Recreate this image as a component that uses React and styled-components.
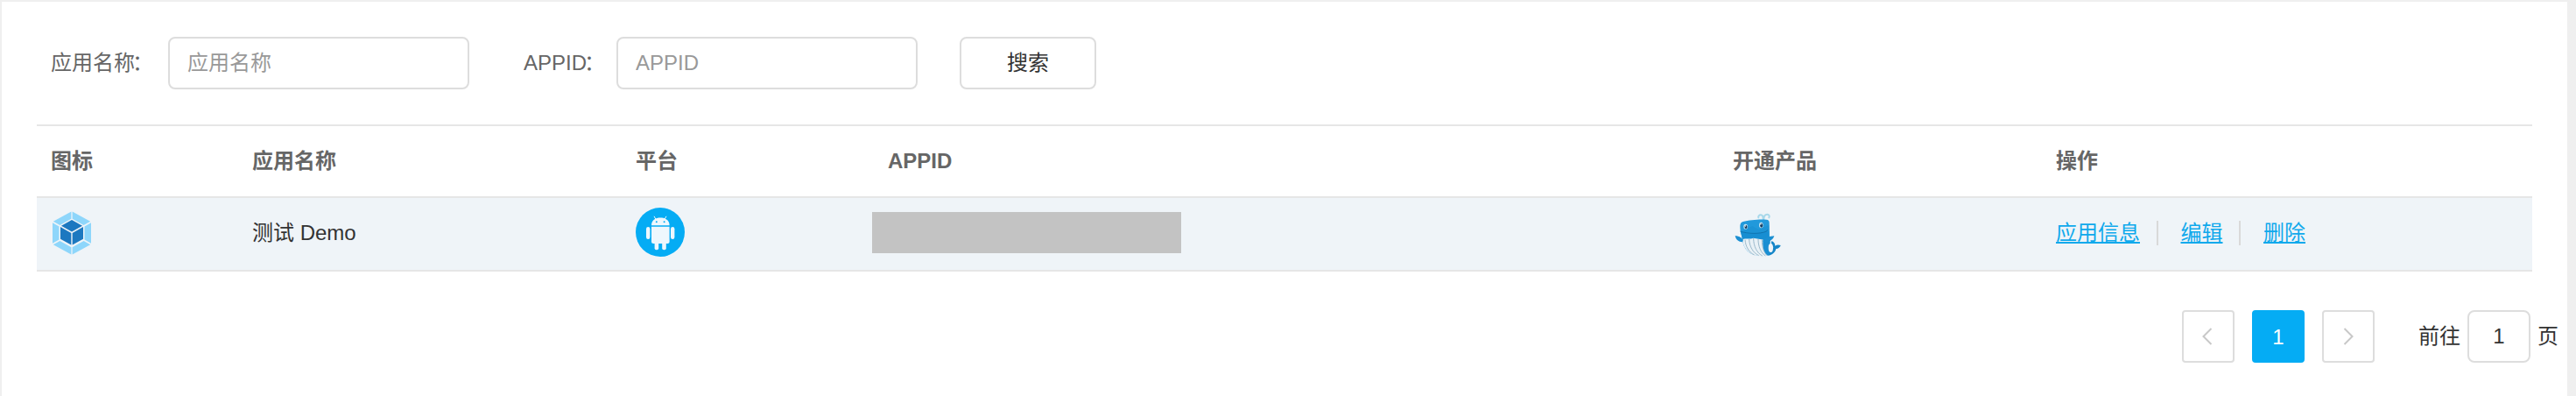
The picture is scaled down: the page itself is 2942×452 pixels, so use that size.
import React from 'react'
import styled, { createGlobalStyle } from 'styled-components'

const GlobalStyle = createGlobalStyle`
  * {
    box-sizing: border-box;
  }

  body {
    margin: 0;
    background: #efefef;
    font-family: "Liberation Sans", "Noto Sans CJK SC", sans-serif;
    font-size: 24px;
    line-height: 34px;
    color: #333;
  }

  input, button {
    font: inherit;
    outline: none;
  }
`;

const Page = styled.main`
  height: 452px;
  margin-right: 10px;
  border-top: 2px solid #efefef;
  border-left: 2px solid #efefef;
  background: #fff;
`;

const Toolbar = styled.form`
  display: flex;
  align-items: center;
  padding: 40px 0 40px 56px;
`;

const Field = styled.label`
  display: flex;
  align-items: center;
  margin-right: ${({ gap }) => gap}px;
`;

const FieldName = styled.span`
  width: ${({ width }) => width}px;
  color: #666;
  white-space: nowrap;
`;

const Colon = styled.span`
  margin-left: -3px;
`;

const TextInput = styled.input`
  width: 344px;
  height: 60px;
  padding: 0 20px;
  border: 2px solid #ddd;
  border-radius: 8px;
  background: #fff;

  &::placeholder {
    color: #999;
    opacity: 1;
  }
`;

const SearchButton = styled.button`
  width: 156px;
  height: 60px;
  padding: 0;
  border: 2px solid #ddd;
  border-radius: 8px;
  background: #fff;
  color: #333;
`;

const Table = styled.section`
  margin: 0 40px;
  border-top: 2px solid #e6e6e6;
`;

const Row = styled.div`
  display: grid;
  grid-template-columns: 230px 438px 288px 965px 369px 1fr;
  align-items: center;
  height: ${({ head }) => (head ? 82 : 84)}px;
  padding-left: 16px;
  padding-bottom: ${({ head }) => (head ? 0 : 4)}px;
  border-bottom: 2px solid #e6e6e6;
  background: ${({ head }) => (head ? '#fff' : '#eff4f8')};
  color: ${({ head }) => (head ? '#666' : '#333')};
  font-weight: ${({ head }) => (head ? 'bold' : 'normal')};
`;

const Cell = styled.div`
  display: flex;
  align-items: center;
  padding-top: ${({ low }) => (low ? 2 : 0)}px;
  white-space: nowrap;
`;

const Mask = styled.div`
  width: 353px;
  height: 47px;
  margin-top: 1px;
  margin-left: -18px;
  background: #c3c3c3;
`;

const Action = styled.a`
  color: #0fa9ec;
  text-decoration: underline;
  text-decoration-thickness: 2px;
  text-underline-offset: 2px;
  text-decoration-skip-ink: none;
  cursor: pointer;

  & + & {
    margin-left: 18.5px;
    padding-left: 28px;
    background: linear-gradient(#d9d9d9, #d9d9d9) left center / 2px 28px no-repeat;
  }
`;

const Pagination = styled.nav`
  display: flex;
  justify-content: flex-end;
  align-items: center;
  margin-top: 44px;
  padding-right: 10px;
`;

const PageButton = styled.button`
  display: flex;
  align-items: center;
  justify-content: center;
  width: 60px;
  height: 60px;
  margin-right: 20px;
  padding: ${({ active }) => (active ? '2px 0 0' : 0)};
  border: 2px solid ${({ active }) => (active ? '#05acf4' : '#ddd')};
  border-radius: 4px;
  background: ${({ active }) => (active ? '#05acf4' : '#fff')};
  color: ${({ active }) => (active ? '#fff' : '#c8c8c8')};
`;

const Jump = styled.label`
  display: flex;
  align-items: center;
  margin-left: 30px;
`;

const JumpInput = styled.input`
  width: 72px;
  height: 60px;
  margin: 0 8px;
  padding: 0;
  border: 2px solid #ddd;
  border-radius: 8px;
  background: #fff;
  color: #333;
  text-align: center;
`;

const AppIcon = () => (
  <svg width="48" height="52" viewBox="0 -1 48 52">
    <g fill="#8ed6fb">
      <path d="M23.4 1.500v8.300L10.400 17 2.800 12.700z" />
      <path d="M24.600 1.500v8.300l13 7.200 7.600-4.300z" />
      <path d="M2 14.200l7.500 4.200v15.200L2 37.800z" />
      <path d="M46 14.200l-7.500 4.200v15.200l7.500 4.200z" />
      <path d="M2.800 39.200l7.600-4.300 13 7.300v8.300z" />
      <path d="M45.200 39.200l-7.600-4.300-13 7.300v8.300z" />
    </g>
    <g fill="#1c78c0">
      <path d="M24 11l12 6.700-12 6.900-12-6.900z" />
      <path d="M11 18.900l12.300 7v13.700L11 32.700z" />
      <path d="M37 18.900l-12.300 7v13.700L37 32.700z" />
    </g>
  </svg>
);

const AndroidIcon = () => (
  <svg width="56" height="56" viewBox="0 0 56 56">
    <circle cx="28" cy="28" r="28" fill="#05acf4" />
    <g fill="#eef7fd">
      <path d="M18 20.200c0-5.600 4.200-8.700 10.200-8.700s10.400 3.100 10.400 8.700z" />
      <path d="M18 21.800h20.600v17c0 1.400-.8 2.200-2.200 2.200H20.200c-1.400 0-2.200-.8-2.200-2.200z" />
      <rect x="12" y="22" width="4.400" height="14" rx="2.200" />
      <rect x="40" y="22" width="4.400" height="14" rx="2.200" />
      <rect x="21.600" y="38" width="4.600" height="10.300" rx="2" />
      <rect x="30.200" y="38" width="4.600" height="10.300" rx="2" />
    </g>
    <path d="M21 9.800l2 3.600M35 9.800l-2 3.600" stroke="#eef7fd" strokeWidth="1" />
    <circle cx="23.800" cy="16.200" r="1" fill="#05acf4" />
    <circle cx="32.600" cy="16.200" r="1" fill="#05acf4" />
  </svg>
);

const WhaleIcon = () => (
  <svg width="56" height="58" viewBox="9 0 168 174">
    {/* spout */}
    <path
      d="M113 43c0-9-1-15-8-15-6 0-10 5-8 9M115 43c0-10 4-17 12-17 6 0 9 6 6 11"
      fill="none"
      stroke="#a8d8ea"
      strokeWidth="6"
      strokeLinecap="round"
    />
    {/* tail */}
    <path d="M118 168c22 1 36-10 39-24 8 0 14-5 16-12-7-3-14-2-19 2 0-8-4-14-12-17-3 9 0 17 6 22-4 8-8 12-14 14z" fill="#1485c8" />
    {/* body */}
    <path d="M44 51c22-6 58-9 80-7 7 0 10 4 10 11l1 63c0 28-12 50-32 50-36 0-58-22-62-59l-6-27c-2-17-2-28 9-31z" fill="#2199db" />
    <path d="M36 86c25 8 58 9 97-2v29H43z" fill="#178ed2" />
    <path d="M76 66l22 12 36-16v21c-30 10-60 12-97 4l15-8z" fill="#087bbf" opacity=".2" />
    {/* belly */}
    <path d="M41 112c14-5 27 0 38-5 13 2 24 4 37 6 0 25 4 45 15 54-46 9-83-7-90-55z" fill="#e9f1f6" />
    <path
      d="M51 113c2 23 12 42 32 52M65 111c1 26 14 47 33 56M80 108c0 28 12 50 30 60M96 111c0 25 9 46 25 57M109 113c0 22 5 42 17 54"
      fill="none"
      stroke="#8fb0c4"
      strokeWidth="2.600"
    />
    <path d="M113 110c7-7 22-5 24 5v45l-8 7c-13-9-20-31-16-57z" fill="#1a8ed2" />
    <ellipse cx="139" cy="141" rx="8" ry="15" fill="#eff4f8" />
    {/* fins */}
    <path d="M17 99c11 1 20 5 28 14l-3 8c-13-1-23-9-25-22zM111 118c10-13 22-17 40-18-4 13-16 21-32 21z" fill="#1b8fd2" />
    <path d="M34 84c27 9 67 10 91 0l3-5" fill="none" stroke="#0d6ca6" strokeWidth="2.400" />
    {/* eyes */}
    <ellipse cx="53" cy="68" rx="7" ry="8.500" fill="#c4e4f3" />
    <ellipse cx="106" cy="63" rx="7" ry="9.500" fill="#c4e4f3" />
    <ellipse cx="54" cy="69" rx="4.500" ry="6" fill="#123b60" />
    <ellipse cx="107" cy="64" rx="4.500" ry="7" fill="#123b60" />
    <circle cx="52" cy="66" r="2" fill="#fff" />
    <circle cx="105" cy="60" r="2" fill="#fff" />
  </svg>
);

const Arrow = ({ next }) => (
  <svg width="24" height="24" viewBox="0 0 24 24">
    <path
      d={next ? 'M7.500 3l9 9-9 9' : 'M15.500 3l-9 9 9 9'}
      fill="none"
      stroke="currentColor"
      strokeWidth="2"
    />
  </svg>
);

const columns = ['图标', '应用名称', '平台', 'APPID', '开通产品', '操作'];
const actions = ['应用信息', '编辑', '删除'];

const App = () => (
  <>
    <GlobalStyle />
    <Page>
      <Toolbar>
        <Field gap={62}>
          <FieldName width={134}>应用名称<Colon>：</Colon></FieldName>
          <TextInput placeholder="应用名称" />
        </Field>
        <Field gap={48}>
          <FieldName width={106}>APPID<Colon>：</Colon></FieldName>
          <TextInput placeholder="APPID" />
        </Field>
        <SearchButton type="button">搜索</SearchButton>
      </Toolbar>
      <Table>
        <Row head>
          {columns.map((name) => <Cell key={name}>{name}</Cell>)}
        </Row>
        <Row>
          <Cell><AppIcon /></Cell>
          <Cell low>测试 Demo</Cell>
          <Cell><AndroidIcon /></Cell>
          <Cell><Mask /></Cell>
          <Cell><WhaleIcon /></Cell>
          <Cell low>
            {actions.map((name) => <Action key={name}>{name}</Action>)}
          </Cell>
        </Row>
      </Table>
      <Pagination>
        <PageButton type="button"><Arrow /></PageButton>
        <PageButton type="button" active>1</PageButton>
        <PageButton type="button"><Arrow next /></PageButton>
        <Jump>
          前往
          <JumpInput defaultValue="1" />
          页
        </Jump>
      </Pagination>
    </Page>
  </>
);

export default App;
